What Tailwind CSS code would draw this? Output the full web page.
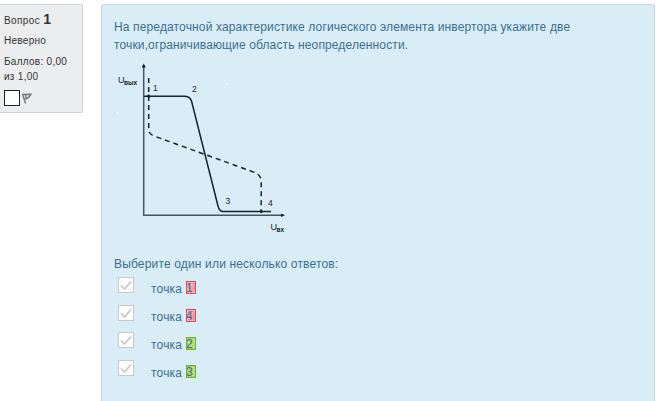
<!DOCTYPE html>
<html lang="ru"><head><meta charset="utf-8"><title>Вопрос 1</title>
<script src="https://cdn.jsdelivr.net/npm/@tailwindcss/browser@4"></script></head>
<body class="bg-white w-[663px] h-[401px] overflow-hidden font-['Liberation_Sans',sans-serif]">
<div class="flex items-start pt-1 h-[401px] overflow-hidden">
<aside class="w-[83px] h-[109px] shrink-0 bg-[#ecedee] border border-l-0 border-[#cfd2d6] rounded-r-xs pl-1 text-[10px] tracking-[0.28px] text-[#333] whitespace-nowrap">
<h3 class="leading-[18px] mt-[5px]"><span class="tracking-[0.4px]">Вопрос</span> <b class="text-[14px]">1</b></h3>
<div class="leading-[15px] mt-[3px]">Неверно</div>
<div class="leading-[15px] mt-[6px]">Баллов: 0,00<br>из 1,00</div>
<div class="flex items-center mt-[6px]"><span class="w-4 h-4 border border-[#222] bg-white"></span>
<svg class="ml-[1px]" width="12" height="12" viewBox="0 0 12 12" fill="none" stroke="#777" stroke-width="1.4"><path d="M1.500 2L4.500 11.500M1 2.500L10 2.200Q7.500 6.800 4 6.800M4.500 3L5 6.500"/></svg></div>
</aside>
<main class="ml-[18px] w-[554px] h-[397px] bg-[#d9edf7] border border-b-0 border-[#bcdae6] rounded-t-[3px] pl-3 text-[12px] text-[#3a6f8f]">
<p class="leading-[18px] mt-[13px] whitespace-nowrap"><span class="tracking-[0.14px]">На передаточной характеристике логического элемента инвертора укажите две</span><br><span class="tracking-[0.13px]">точки,ограничивающие область неопределенности.</span></p>
<svg class="mt-[6px]" width="190" height="180" viewBox="114 60 190 180" fill="none" stroke="#16232b" stroke-width="1.5">
<path stroke="#46545c" d="M143.700 65V215.200H282"/><path fill="#16232b" stroke="none" d="M143.700 63.500l2 4h-4zM285 215.200l-4-1.800v3.600z"/>
<path d="M144 96.200H184Q190 96.200 191.500 101L218 206Q219.500 211.500 223 211.500H271"/>
<path stroke-dasharray="5 4" d="M148.700 78V130Q149 134 154 136L252 171.500Q261 174 261.200 181V212"/>
<circle cx="148.700" cy="96.200" r="1.600" fill="#16232b" stroke="none"/><circle cx="261.200" cy="211.500" r="1.600" fill="#16232b" stroke="none"/>
<g fill="#16232b" stroke="none" font-size="8.500"><text x="153" y="91">1</text><text x="192" y="92">2</text><text x="225.500" y="203.500">3</text><text x="268" y="206">4</text><text x="118" y="82.500" font-size="9">U</text><text x="124" y="84.500" font-size="6.500" font-weight="bold">вых</text><text x="270.500" y="229.500" font-size="9">U</text><text x="276.500" y="232" font-size="6.500" font-weight="bold">вх</text></g>
<g fill="white" stroke="none"><circle cx="117.500" cy="112.500" r=".8"/><circle cx="227" cy="84" r=".8"/></g></svg>
<p class="leading-[18px] mt-[15px] tracking-[0.16px]">Выберите один или несколько ответов:</p>
<ul class="mt-1 pl-1">
<li class="h-7 flex items-start"><span class="w-4 h-4 bg-white border border-[#c8c8c8]"><svg class="block" width="14" height="14" fill="none" stroke="#c6c6c6" stroke-width="1.6"><path d="M2 7.500L5.500 11L12 3.500"/></svg></span><span class="ml-[17px] mt-1 leading-4 w-[35px] tracking-[0.2px]">точка</span><span class="relative mt-1 w-[10px] h-[13px] border border-[#e3484f] bg-[#f6b9bf] leading-[13px]"><svg class="absolute left-0 top-0" width="8" height="11" fill="none" stroke="#ea8388"><path d="M4.500 1.500H1.500V5H4.500M5.500 1.500H7V5H5.500M1.500 6.500H4V9.500H1.500M5.500 6.500H7V9.500H5.500"/></svg><span class="absolute -left-[1px] top-0">1</span></span></li>
<li class="h-7 flex items-start"><span class="w-4 h-4 bg-white border border-[#c8c8c8]"><svg class="block" width="14" height="14" fill="none" stroke="#c6c6c6" stroke-width="1.6"><path d="M2 7.500L5.500 11L12 3.500"/></svg></span><span class="ml-[17px] mt-1 leading-4 w-[35px] tracking-[0.2px]">точка</span><span class="relative mt-1 w-[10px] h-[13px] border border-[#e3484f] bg-[#f6b9bf] leading-[13px]"><svg class="absolute left-0 top-0" width="8" height="11" fill="none" stroke="#ea8388"><path d="M4.500 1.500H1.500V5H4.500M5.500 1.500H7V5H5.500M1.500 6.500H4V9.500H1.500M5.500 6.500H7V9.500H5.500"/></svg><span class="absolute -left-[1px] top-0">4</span></span></li>
<li class="h-7 flex items-start"><span class="-mt-px w-4 h-4 bg-white border border-[#c8c8c8]"><svg class="block" width="14" height="14" fill="none" stroke="#c6c6c6" stroke-width="1.6"><path d="M2 7.500L5.500 11L12 3.500"/></svg></span><span class="ml-[17px] mt-1 leading-4 w-[35px] tracking-[0.2px]">точка</span><span class="relative mt-1 w-[10px] h-[13px] border border-[#78b41e] bg-[#a5d05c] leading-[13px]"><svg class="absolute left-0 top-0" width="8" height="11" fill="none" stroke="#d4eab2"><path d="M4.500 1.500H1.500V5H4.500M5.500 1.500H7V5H5.500M1.500 6.500H4V9.500H1.500M5.500 6.500H7V9.500H5.500"/></svg><span class="absolute -left-[1px] top-0">2</span></span></li>
<li class="h-7 flex items-start"><span class="-mt-px w-4 h-4 bg-white border border-[#c8c8c8]"><svg class="block" width="14" height="14" fill="none" stroke="#c6c6c6" stroke-width="1.6"><path d="M2 7.500L5.500 11L12 3.500"/></svg></span><span class="ml-[17px] mt-1 leading-4 w-[35px] tracking-[0.2px]">точка</span><span class="relative mt-1 w-[10px] h-[13px] border border-[#78b41e] bg-[#a5d05c] leading-[13px]"><svg class="absolute left-0 top-0" width="8" height="11" fill="none" stroke="#d4eab2"><path d="M4.500 1.500H1.500V5H4.500M5.500 1.500H7V5H5.500M1.500 6.500H4V9.500H1.500M5.500 6.500H7V9.500H5.500"/></svg><span class="absolute -left-[1px] top-0">3</span></span></li>
</ul>
</main></div></body></html>
